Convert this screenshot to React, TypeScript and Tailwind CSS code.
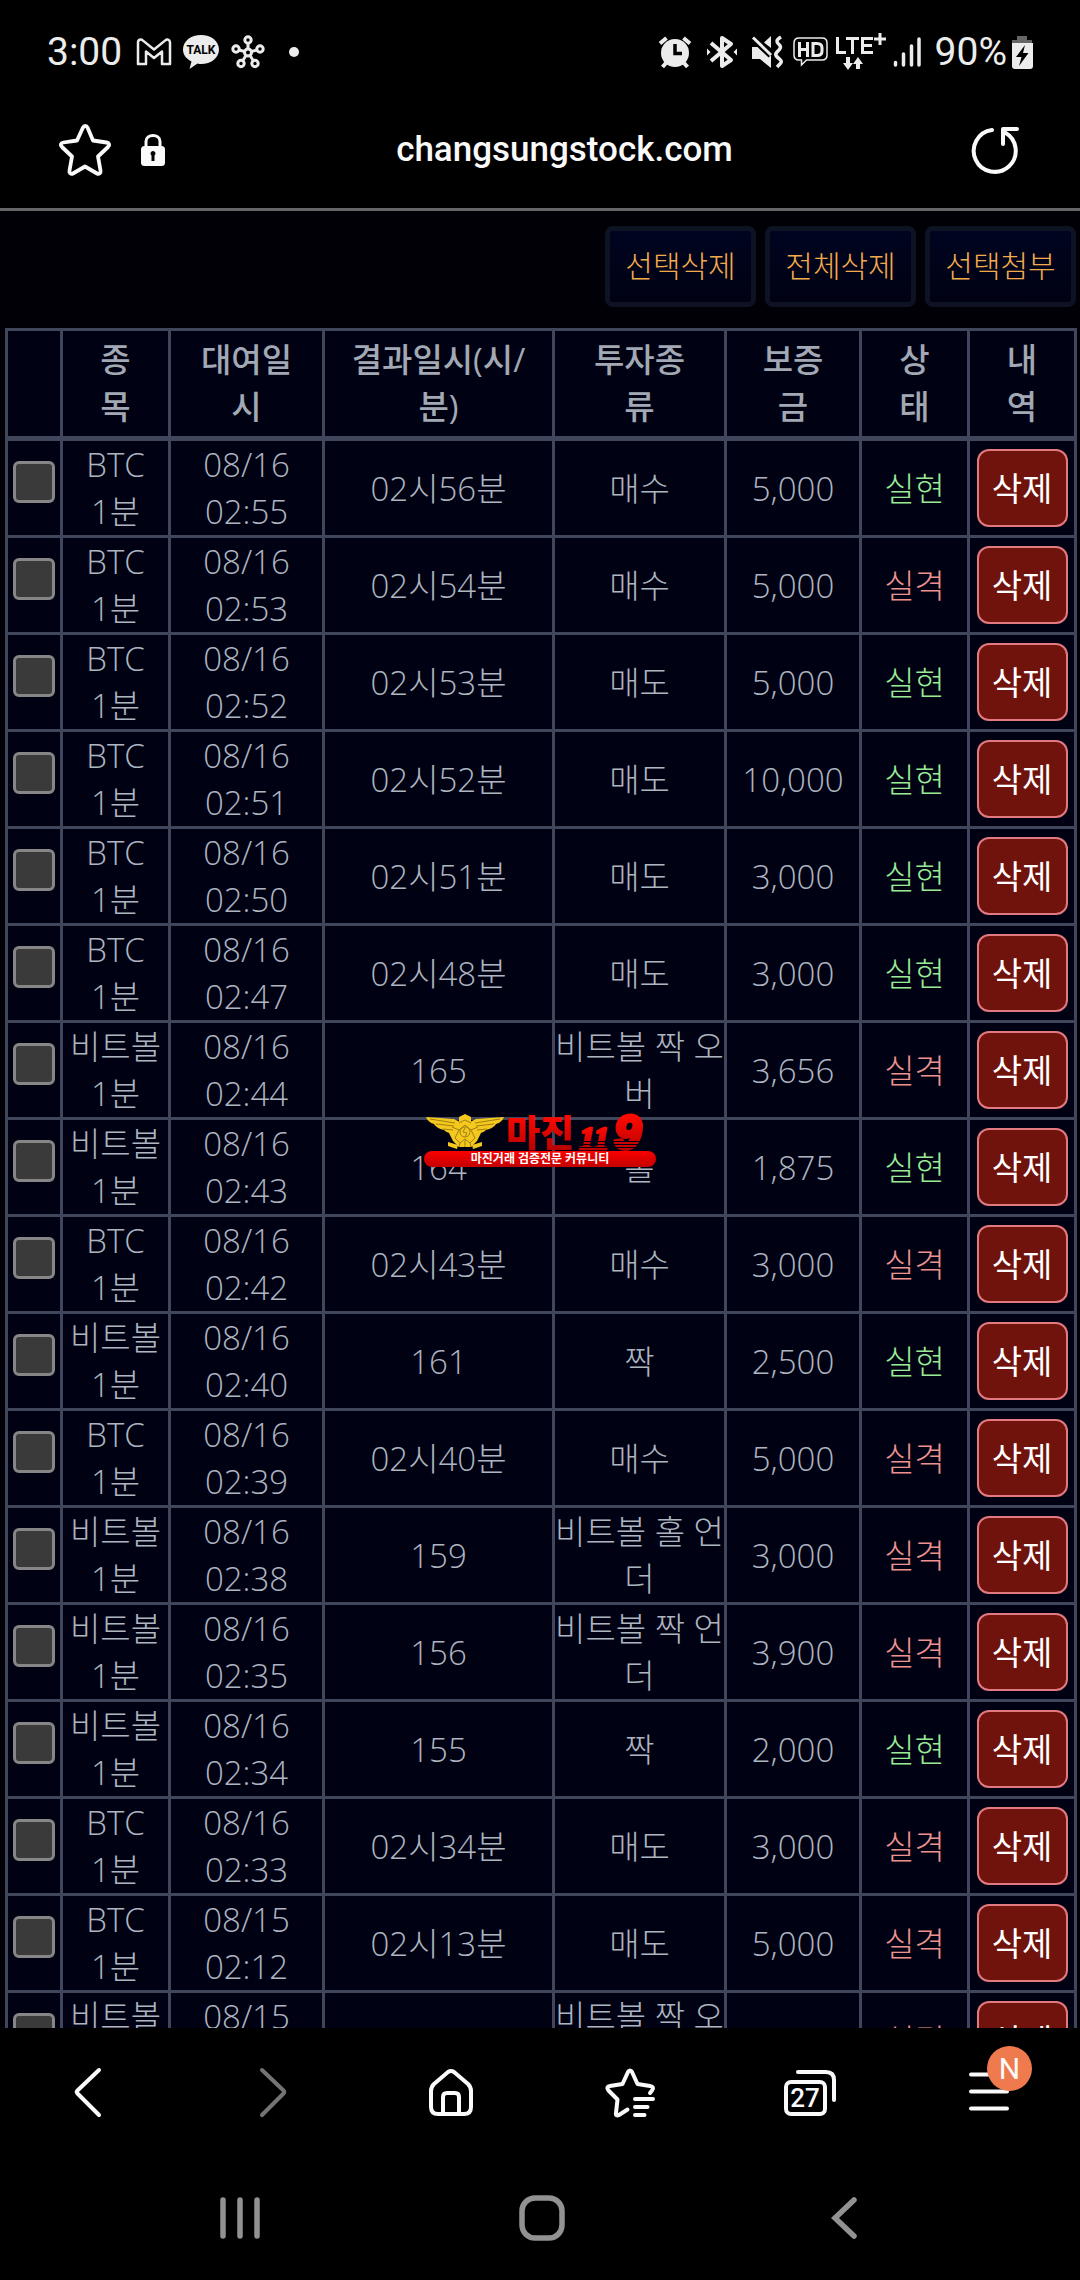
import type { ReactNode } from "react";

type Status = "실현" | "실격";

interface Row {
  item: string;
  date: string;
  time: string;
  result: string;
  kind: string;
  deposit: string;
  status: Status;
}

const row = (
  item: string,
  date: string,
  time: string,
  result: string,
  kind: string,
  deposit: string,
  status: Status
): Row => ({ item, date, time, result, kind, deposit, status });

const rows: Row[] = [
  row("BTC", "08/16", "02:55", "02시56분", "매수", "5,000", "실현"),
  row("BTC", "08/16", "02:53", "02시54분", "매수", "5,000", "실격"),
  row("BTC", "08/16", "02:52", "02시53분", "매도", "5,000", "실현"),
  row("BTC", "08/16", "02:51", "02시52분", "매도", "10,000", "실현"),
  row("BTC", "08/16", "02:50", "02시51분", "매도", "3,000", "실현"),
  row("BTC", "08/16", "02:47", "02시48분", "매도", "3,000", "실현"),
  row("비트볼", "08/16", "02:44", "165", "비트볼 짝 오버", "3,656", "실격"),
  row("비트볼", "08/16", "02:43", "164", "홀", "1,875", "실현"),
  row("BTC", "08/16", "02:42", "02시43분", "매수", "3,000", "실격"),
  row("비트볼", "08/16", "02:40", "161", "짝", "2,500", "실현"),
  row("BTC", "08/16", "02:39", "02시40분", "매수", "5,000", "실격"),
  row("비트볼", "08/16", "02:38", "159", "비트볼 홀 언더", "3,000", "실격"),
  row("비트볼", "08/16", "02:35", "156", "비트볼 짝 언더", "3,900", "실격"),
  row("비트볼", "08/16", "02:34", "155", "짝", "2,000", "실현"),
  row("BTC", "08/16", "02:33", "02시34분", "매도", "3,000", "실격"),
  row("BTC", "08/15", "02:12", "02시13분", "매도", "5,000", "실격"),
  row("비트볼", "08/15", "02:11", "", "비트볼 짝 오버", "", "실격"),
];

const headers = ["종목", "대여일시", "결과일시(시/분)", "투자종류", "보증금", "상태", "내역"];

function StatusBar() {
  return (
    <div className="flex h-[104px] shrink-0 items-center justify-between pl-[47px] pr-[47px] text-[39px] text-[#ececec]">
      <div className="flex items-center">
        <span className="w-[89px]">3:00</span>
        <svg width="36" height="28" viewBox="0 0 36 28" fill="none" stroke="#ececec" strokeWidth="2.5" strokeLinejoin="round">
          <path d="M2 4.5C2 1.5 5 .8 7 2.6L18 11.5 29 2.6C31 .8 34 1.5 34 4.5V26H26V13.5L18 20 10 13.5V26H2Z" />
        </svg>
        <svg className="ml-[11px]" width="36" height="36" viewBox="0 0 36 36">
          <path fill="#ececec" d="M18 1C8 1 0 7 0 15.500C0 21 3.500 25 8.500 27.500L6.500 35 14.500 29.500C16 30 17 30 18 30C28 30 36 24 36 15.500S28 1 18 1Z" />
          <text x="18" y="20" textAnchor="middle" fontSize="12" fontWeight="700" fontFamily="Roboto, sans-serif" fill="#000">TALK</text>
        </svg>
        <svg className="ml-3" width="34" height="34" viewBox="0 0 34 34" fill="none" stroke="#ececec" strokeWidth="3">
          <circle cx="17" cy="17.500" r="3.500" />
          <circle cx="17" cy="5" r="3.200" />
          <circle cx="29" cy="14" r="3.200" />
          <circle cx="24" cy="28.500" r="3.200" />
          <circle cx="10" cy="28.500" r="3.200" />
          <circle cx="5" cy="14" r="3.200" />
          <path d="M17 8V14M26 15L20.500 16.500M22.500 26L19 20.500M11.500 26L15 20.500M8 15L13.500 16.500" />
        </svg>
        <span className="ml-6 size-[10px] rounded-full bg-[#ececec]" />
      </div>
      <div className="flex items-center">
        <svg width="34" height="34" viewBox="0 0 34 34">
          <g stroke="#ececec" strokeWidth="4">
            <path d="M2 8.500L8.500 3M32 8.500L25.500 3M8 28L4.500 32M26 28L29.500 32" />
          </g>
          <circle cx="17" cy="18" r="14" fill="#ececec" />
          <path d="M17 9V18.500H24" fill="none" stroke="#000" strokeWidth="3.500" />
        </svg>
        <svg className="ml-3.5" width="32" height="36" viewBox="0 0 32 36" fill="none" stroke="#ececec" strokeWidth="4">
          <path d="M5 9L25 26 16 32V4L25 10 5 27" strokeLinejoin="round" />
          <path d="M1 14.500V21.500L4.500 18ZM31 14.500V21.500L27.500 18Z" fill="#ececec" stroke="none" />
        </svg>
        <svg className="ml-3" width="34" height="34" viewBox="0 0 34 34">
          <path fill="#ececec" d="M2 12H10L21 20V33L10 24H2ZM21 1V13L14 7.500Z" />
          <path d="M3 3L21 20" stroke="#000" strokeWidth="7" />
          <path d="M3 2.500L21 20" stroke="#ececec" strokeWidth="3" />
          <path d="M31 2C26 5 26 7 29 9.500S30 14 27 17 27 22 30 24.500 30 29 27 32" fill="none" stroke="#ececec" strokeWidth="3.500" />
        </svg>
        <svg className="ml-[9px]" width="36" height="32" viewBox="0 0 36 32" fill="none" stroke="#ececec">
          <path strokeWidth="1.500" d="M6 2H29C32 2 34 4 34 7V19C34 22 32 24 29 24H13.500L8.500 29V24H6C3 24 1 22 1 19V7C1 4 3 2 6 2Z" />
          <path strokeWidth="3" d="M6.500 6V21M14.500 6V21M6.500 13.500H14.500M20 7.500H24C27.500 7.500 29 9 29 12V15C29 18 27.500 19.500 24 19.500H20Z" />
        </svg>
        <svg className="ml-1.5" width="52" height="40" viewBox="0 0 52 40" fill="none" stroke="#ececec" strokeWidth="3">
          <path d="M2.500 5V20.500H11M11 6.500H24M17.500 6.500V22M38 6.500H27.500V20.500H38M27.500 13.500H37M45 1V13M39 7H51" />
          <path strokeWidth="4" d="M13 25V33M23 30V37" />
          <path d="M8 31H18L13 38ZM18 32H28L23 25Z" fill="#ececec" stroke="none" />
        </svg>
        <svg className="ml-1.5" width="28" height="32" viewBox="0 0 28 32" stroke="#ececec" strokeWidth="3.500" strokeLinecap="round">
          <path d="M2.500 26.500V29M10.500 18V29M18.500 10V29M26 3V29" />
        </svg>
        <span className="ml-3.5 mr-1">90%</span>
        <svg width="22" height="34" viewBox="0 0 22 34">
          <path fill="#666" d="M6 1H16V5H21V8H1V5H6Z" />
          <path fill="#ececec" d="M1 8H22V31C22 33 21 34 19 34H4C2 34 1 33 1 31Z" />
          <path fill="#000" d="M14 10L5 22H10.500L8 31 17.500 18H12Z" />
        </svg>
      </div>
    </div>
  );
}

function AddressBar() {
  return (
    <header className="flex h-[107px] shrink-0 items-center border-b-[3px] border-[#666] pr-[57px] pb-3 pl-[58px] text-[#fafafa]">
      <button aria-label="즐겨찾기">
        <svg width="54" height="54" viewBox="0 0 54 54" fill="none" stroke="currentColor" strokeWidth="3.800" strokeLinejoin="round">
          <path d="M25 4.500C26 2.500 28.500 2.500 29.500 4.500L35 17.500 48.500 19.500C51.500 20 52 22 50 24L40 33.500 42.500 47.500C43 50 41 51.500 39 50.500L27 43.500 15 50.500C13 51.500 11 50 11.500 47.500L14 33.500 4 24C2 22 2.500 20 5.500 19.500L19 17.500Z" />
        </svg>
      </button>
      <svg className="ml-7" width="26" height="34" viewBox="0 0 26 34">
        <path d="M6 15V8.500C6 .500 20 .500 20 8.500V15" fill="none" stroke="currentColor" strokeWidth="3" />
        <rect x="1" y="13" width="24" height="20" rx="3.500" fill="currentColor" />
        <path fill="#000" d="M13 18A2.500 2.500 0 0 1 14.500 22.500V28H11.500V22.500A2.500 2.500 0 0 1 13 18Z" />
      </svg>
      <span className="grow pr-[72px] pl-16 text-center text-[35px] font-medium">changsungstock.com</span>
      <button aria-label="새로고침">
        <svg width="52" height="52" viewBox="0 0 52 52" fill="none" stroke="currentColor" strokeWidth="4" strokeLinecap="round">
          <path d="M21 6A21 21 0 1 0 34 8.500" />
          <path d="M32 20V5H46" strokeLinejoin="round" />
        </svg>
      </button>
    </header>
  );
}

function ActionButton({ children }: { children: ReactNode }) {
  return (
    <button className="h-[81px] w-[151px] rounded-lg border-[5px] border-[#0e1323] bg-linear-to-b from-[#000420] to-[#000213] pb-0.5 text-[30px] font-light text-[#f2ab4c]">
      {children}
    </button>
  );
}

function HistoryTable() {
  const td = "border-[3px] border-[#40465c] p-0";
  return (
    <table className="w-full table-fixed border-collapse bg-[#000213] text-center text-[33px] leading-[47px] font-light break-all text-[#aeb5c0]">
      <colgroup>
        <col className="w-[55px]" />
        <col className="w-[108px]" />
        <col className="w-[154px]" />
        <col className="w-[230px]" />
        <col className="w-[172px]" />
        <col className="w-[135px]" />
        <col className="w-[108px]" />
        <col className="w-[107px]" />
      </colgroup>
      <thead>
        <tr className="h-[109px]">
          <td className="border-[3px] border-b-[5px] border-[#40465c]" />
          {headers.map((header) => (
            <th
              key={header}
              className="border-[3px] border-b-[5px] border-[#40465c] px-[26px] pt-0 pb-0.5 font-medium text-[#a2a9b4]"
            >
              {header}
            </th>
          ))}
        </tr>
      </thead>
      <tbody>
        {rows.map((r) => (
          <tr key={r.date + r.time} className="h-[97px]">
            <td className={td}>
              <input
                type="checkbox"
                aria-label={`${r.item} ${r.date} ${r.time}`}
                className="mx-auto mb-3 block size-[42px] appearance-none rounded-md border-[3px] border-[#868686] bg-[#3a3a3a]"
              />
            </td>
            <td className={td}>
              {r.item}
              <br />
              1분
            </td>
            <td className={td}>
              {r.date}
              <br />
              {r.time}
            </td>
            <td className={td}>{r.result}</td>
            <td className={td}>{r.kind}</td>
            <td className={td}>{r.deposit}</td>
            <td className={r.status === "실현" ? `${td} text-[#9aeb96]` : `${td} text-[#ee9290]`}>{r.status}</td>
            <td className={td}>
              <button className="h-[78px] w-[91px] rounded-xl border-2 border-[#e27880] bg-[#6f130c] align-middle font-normal text-white">
                삭제
              </button>
            </td>
          </tr>
        ))}
      </tbody>
    </table>
  );
}

function Emblem() {
  return (
    <div className="pointer-events-none absolute top-1/2 left-1/2 w-[232px] -translate-x-1/2 -translate-y-1/2">
      <svg className="block" width="232" height="38" viewBox="0 0 232 38">
        <defs>
          <linearGradient id="red" x1="0" y1="0" x2="0" y2="1">
            <stop offset="0.2" stopColor="#ff0a00" />
            <stop offset="1" stopColor="#a80000" />
          </linearGradient>
        </defs>
        <g fill="#f4c81d">
          <path d="M2 4L30 6 36 9 33 21C26 21 22 19 20 17 15 16 11 13 10 11 6 10 3 7 2 4ZM80 4L52 6 46 9 49 21C56 21 60 19 62 17 67 16 71 13 72 11 76 10 79 7 80 4Z" />
          <path d="M41 1L47 4V10L54 14 57 20 53 28 47 34H35L29 28 25 20 28 14 35 10V4Z" />
          <path d="M24 29L34 32 33 36 24 33ZM58 29L48 32 49 36 58 33Z" />
        </g>
        <g fill="none" stroke="#a08012" strokeWidth="1">
          <path d="M6 6L31 10M12 11L30 13M19 16L29 17M76 6L51 10M70 11L52 13M63 16L53 17" />
          <path d="M35 10L41 7 47 10M28 14L35 17 41 12 47 17 54 14M35 17L31 25 36 30 41 26 46 30 51 25 47 17M41 26V34M36 30L35 34M46 30L47 34" />
          <circle cx="41" cy="19" r="5" />
          <path d="M41 15L39 19 43 20 41 24" />
        </g>
        <text x="82" y="34" fontSize="37" fontWeight="900" fontFamily="'Noto Sans CJK KR', sans-serif" fill="url(#red)">마진</text>
        <g fontWeight="700" fontStyle="italic" fill="url(#red)" stroke="url(#red)" strokeLinejoin="round">
          <text x="155" y="36" fontSize="32" fontFamily="'Liberation Serif', serif" strokeWidth="2.500">11</text>
          <text x="190" y="36" fontSize="49" fontFamily="'Liberation Sans', sans-serif" strokeWidth="4">9</text>
        </g>
        <path d="M150 28.500H222M150 31.500H222M150 34.500H222" stroke="#000213" strokeWidth="1" />
      </svg>
      <div className="flex h-4 items-center justify-center rounded-full bg-linear-to-b from-[#fb0000] to-[#c40000] text-[12px] leading-4 font-bold text-white">
        마진거래 검증전문 커뮤니티
      </div>
    </div>
  );
}

function BrowserToolbar() {
  return (
    <nav className="grid h-[126px] shrink-0 grid-cols-6 place-items-center bg-black pt-0.5 text-[#fafafa]">
      <button aria-label="뒤로">
        <svg width="54" height="54" viewBox="0 0 54 54" fill="none" stroke="currentColor" strokeWidth="4" strokeLinecap="round" strokeLinejoin="round">
          <path d="M36 5L14.500 25.500Q13 27 14.500 28.500L36 50" />
        </svg>
      </button>
      <button aria-label="앞으로" disabled>
        <svg width="54" height="54" viewBox="0 0 54 54" fill="none" stroke="#747474" strokeWidth="4" strokeLinecap="round" strokeLinejoin="round">
          <path d="M19 5L40.500 25.500Q42 27 40.500 28.500L19 50" />
        </svg>
      </button>
      <button aria-label="홈">
        <svg width="54" height="54" viewBox="0 0 54 54" fill="none" stroke="currentColor" strokeWidth="4" strokeLinejoin="round">
          <path d="M25 7Q28 5 31 7L45 19Q48 22 48 26V42Q48 49 41 49H15Q8 49 8 42V26Q8 22 11 19Z" />
          <path d="M20 49V32Q20 28 24 28H32Q36 28 36 32V49" />
        </svg>
      </button>
      <button aria-label="즐겨찾기 목록">
        <svg width="54" height="54" viewBox="0 0 54 54" fill="none" stroke="currentColor" strokeWidth="4" strokeLinecap="round" strokeLinejoin="round">
          <path d="M47 28L49 25.500C51 23 50 21.500 47 21L34.500 19 29 7C28 5 26 5 25 7L19.500 19 7 21C4 21.500 3.500 23.500 5.500 25.500L14.500 34.500 13 48C12.500 50.500 14 51 16 50L24.500 44.500" />
          <path d="M32 34H50M32 42H44.500M32 50H41.500" />
        </svg>
      </button>
      <button aria-label="탭 27개">
        <svg width="54" height="54" viewBox="0 0 54 54" fill="none" stroke="currentColor" strokeWidth="4" strokeLinecap="round">
          <rect x="3" y="17" width="39" height="32" rx="5" />
          <path d="M15 7H43Q51 7 51 15V35" />
          <text x="22" y="42" textAnchor="middle" fontSize="26" fontWeight="500" fontFamily="Roboto, sans-serif" fill="currentColor" stroke="none">27</text>
        </svg>
      </button>
      <button aria-label="메뉴" className="relative">
        <svg width="54" height="54" viewBox="0 0 54 54" stroke="currentColor" strokeWidth="4" strokeLinecap="round">
          <path d="M8 9.500H44M8 26.500H44M8 43.500H44" />
        </svg>
        <span className="absolute -top-[19px] -right-[15px] flex size-[45px] items-center justify-center rounded-full bg-[#ef7a4d] text-[30px]">
          N
        </span>
      </button>
    </nav>
  );
}

function SystemNav() {
  return (
    <nav className="grid h-[126px] shrink-0 grid-cols-3 place-items-center bg-black pt-0.5 pr-[86px] pl-[90px] text-[#929292]">
      <button aria-label="최근 앱">
        <svg width="46" height="46" viewBox="0 0 46 46" stroke="currentColor" strokeWidth="5.500" strokeLinecap="round">
          <path d="M5 5V41M22 5V41M39 5V41" />
        </svg>
      </button>
      <button aria-label="홈 화면">
        <svg width="46" height="46" viewBox="0 0 46 46" fill="none" stroke="currentColor" strokeWidth="5.500">
          <rect x="3" y="3" width="40" height="40" rx="13" />
        </svg>
      </button>
      <button aria-label="이전">
        <svg width="46" height="46" viewBox="0 0 46 46" fill="none" stroke="currentColor" strokeWidth="5.500" strokeLinecap="round">
          <path d="M34 5L15 23 34 41" />
        </svg>
      </button>
    </nav>
  );
}

export default function App() {
  return (
    <div className="relative flex h-screen flex-col overflow-hidden bg-black font-['Roboto','Noto_Sans_CJK_KR',sans-serif]">
      <StatusBar />
      <AddressBar />
      <main className="min-h-0 flex-1 overflow-hidden bg-[#000006] pt-[15px] pr-1 pl-[5px] font-['Open_Sans','Noto_Sans_CJK_KR',sans-serif]">
        <div className="mb-[21px] flex justify-end gap-[9px]">
          <ActionButton>선택삭제</ActionButton>
          <ActionButton>전체삭제</ActionButton>
          <ActionButton>선택첨부</ActionButton>
        </div>
        <HistoryTable />
      </main>
      <BrowserToolbar />
      <SystemNav />
      <Emblem />
    </div>
  );
}
